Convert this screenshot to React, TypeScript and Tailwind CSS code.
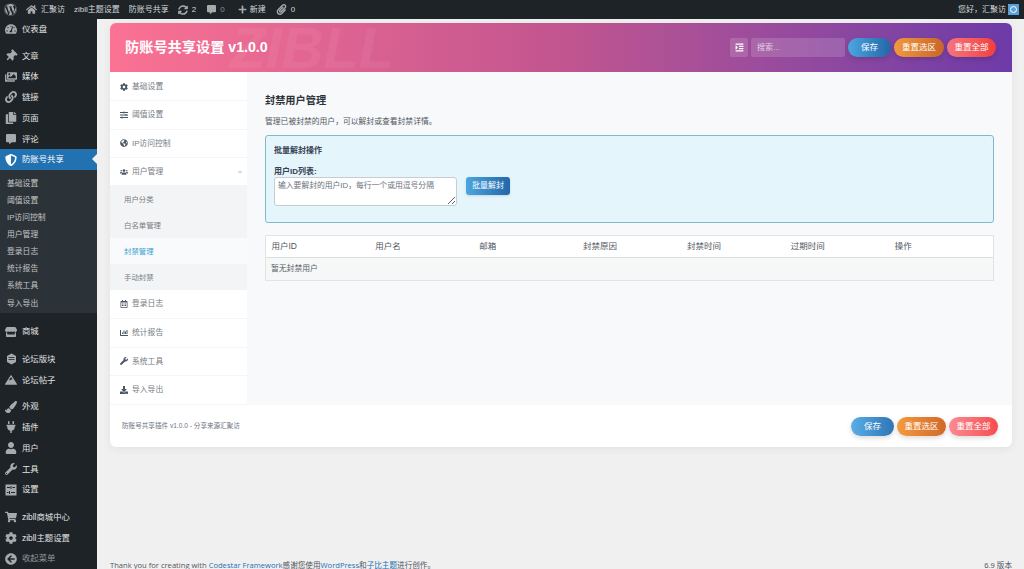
import type { ReactNode } from "react";
import {
  FaArrowCircleLeft,
  FaChartBar,
  FaChevronDown,
  FaCog,
  FaCommentAlt,
  FaCopy,
  FaDownload,
  FaGlobeAmericas,
  FaHome,
  FaImages,
  FaIndent,
  FaLink,
  FaMountain,
  FaPaintBrush,
  FaPaperclip,
  FaPlug,
  FaPlus,
  FaRegCalendarAlt,
  FaShieldAlt,
  FaShoppingCart,
  FaSlidersH,
  FaStore,
  FaSyncAlt,
  FaTachometerAlt,
  FaThumbtack,
  FaUser,
  FaUsers,
  FaWordpress,
  FaWrench,
} from "react-icons/fa";

const font = "font-['Liberation_Sans','Noto_Sans_CJK_SC',sans-serif]";

function MenuItem({ icon, label, className = "text-[#e2e4e6]" }: { icon: ReactNode; label: string; className?: string }) {
  return (
    <div className={`flex h-[21px] items-center text-[8.4px] ${className}`}>
      <span className="flex w-[22px] justify-center text-[12px] text-[#a7aaad]">{icon}</span>
      <span>{label}</span>
    </div>
  );
}

function ForumIcon() {
  return (
    <svg width="11" height="12" viewBox="0 0 11 12" fill="currentColor">
      <path d="M5.5 0.5 10 3v6l-4.5 2.5L1 9V3z" />
      <path d="M2.5 4.5h6M2.5 6.5h6" stroke="#1d2327" strokeWidth="0.8" />
    </svg>
  );
}

function SettingsIcon() {
  return (
    <svg width="12" height="12" viewBox="0 0 12 12">
      <rect x="0.5" y="0.5" width="11" height="11" fill="currentColor" />
      <path d="M2 3.5h3M7.5 3.5H10M2 8.5h1.5M6 8.5h4M6 2v3M4.5 7v3" stroke="#1d2327" strokeWidth="1" fill="none" />
    </svg>
  );
}

function Sidebar() {
  const subs = ["基础设置", "阈值设置", "IP访问控制", "用户管理", "登录日志", "统计报告", "系统工具", "导入导出"];
  return (
    <aside className="flex w-[97px] shrink-0 flex-col bg-[#1d2327]">
      <MenuItem icon={<FaTachometerAlt />} label="仪表盘" />
      <div className="mt-[6px]" />
      <MenuItem icon={<FaThumbtack className="rotate-45" />} label="文章" />
      <MenuItem icon={<FaImages />} label="媒体" />
      <MenuItem icon={<FaLink />} label="链接" />
      <MenuItem icon={<FaCopy />} label="页面" />
      <MenuItem icon={<FaCommentAlt className="text-[10px]" />} label="评论" />
      <div className="relative">
        <MenuItem icon={<span className="text-white"><FaShieldAlt /></span>} label="防账号共享" className="bg-[#2271b1] text-white" />
        <span className="absolute right-0 top-[5px] h-0 w-0 border-y-[5px] border-r-[5px] border-y-transparent border-r-[#f0f0f1]" />
      </div>
      <div className="flex h-[145px] flex-col bg-[#2c3338] pt-[5px]">
        {subs.map((s) => (
          <div key={s} className="flex h-[17.1px] items-center pl-[7px] text-[7.8px] text-[#c3c4c7]">
            {s}
          </div>
        ))}
      </div>
      <div className="mt-[8px]" />
      <MenuItem icon={<FaStore />} label="商城" />
      <div className="mt-[7px]" />
      <MenuItem icon={<ForumIcon />} label="论坛版块" />
      <MenuItem icon={<FaMountain />} label="论坛帖子" />
      <div className="mt-[6px]" />
      <MenuItem icon={<FaPaintBrush />} label="外观" />
      <MenuItem icon={<FaPlug />} label="插件" />
      <MenuItem icon={<FaUser />} label="用户" />
      <MenuItem icon={<FaWrench />} label="工具" />
      <MenuItem icon={<SettingsIcon />} label="设置" />
      <div className="mt-[7px]" />
      <MenuItem icon={<FaShoppingCart />} label="zibll商城中心" />
      <MenuItem icon={<FaCog />} label="zibll主题设置" />
      <MenuItem icon={<FaArrowCircleLeft />} label="收起菜单" className="text-[#94979b]" />
    </aside>
  );
}

function TopBar() {
  return (
    <header className="flex h-[19px] shrink-0 items-center bg-[#1d2327] text-[8px] text-[#d5d7d9]">
      <span className="flex w-[20px] justify-center pl-[1px] text-[13px] text-[#a7aaad]">
        <FaWordpress />
      </span>
      <span className="ml-[6px] flex items-center gap-[4px]">
        <FaHome className="text-[11px] text-[#a7aaad]" />
        汇聚访
      </span>
      <span className="ml-[9px]">zibll主题设置</span>
      <span className="ml-[9px]">防账号共享</span>
      <span className="ml-[9px] flex items-center gap-[4px]">
        <FaSyncAlt className="text-[10px] text-[#a7aaad]" />2
      </span>
      <span className="ml-[11px] flex items-center gap-[4px] text-[#8c8f94]">
        <FaCommentAlt className="text-[9px] text-[#a7aaad]" />0
      </span>
      <span className="ml-[13px] flex items-center gap-[3px]">
        <FaPlus className="text-[9px] text-[#a7aaad]" />
        新建
      </span>
      <span className="ml-[10px] flex items-center gap-[4px]">
        <FaPaperclip className="text-[11px] text-[#a7aaad]" />0
      </span>
      <span className="ml-auto mr-[2px]">您好，汇聚访</span>
      <span className="mr-[5px] flex h-[11px] w-[11px] items-center justify-center bg-[#5aa0d8]">
        <span className="h-[7px] w-[7px] rounded-full border border-white" />
      </span>
    </header>
  );
}

function PillButton({ label, tone }: { label: string; tone: string }) {
  return <button className={`h-[19px] rounded-full text-[8.5px] text-white shadow-[0_2px_5px_rgba(0,0,0,0.15)] ${tone}`}>{label}</button>;
}

function NavItem({ icon, label, h = "h-[28.6px]", children }: { icon: ReactNode; label: string; h?: string; children?: ReactNode }) {
  return (
    <div className={`flex items-center border-b border-[#f4f5f7] pl-[9px] text-[7.8px] text-[#767c84] ${h}`}>
      <span className="flex w-[9px] justify-center text-[8px] text-[#4b5563]">{icon}</span>
      <span className="ml-[4px]">{label}</span>
      {children}
    </div>
  );
}

function SettingsNav() {
  return (
    <nav className="flex w-[137px] shrink-0 flex-col bg-white pt-[1px]">
      <NavItem h="h-[28.35px]" icon={<FaCog />} label="基础设置" />
      <NavItem h="h-[28.35px]" icon={<FaSlidersH />} label="阈值设置" />
      <NavItem h="h-[28.35px]" icon={<FaGlobeAmericas />} label="IP访问控制" />
      <NavItem h="h-[28.35px]" icon={<FaUsers />} label="用户管理">
        <FaChevronDown className="ml-auto mr-[5px] text-[4px] text-[#9ca3af]" />
      </NavItem>
      <div className="flex flex-col bg-[#f3f4f5] text-[7.4px] text-[#767c84]">
        <div className="flex h-[26px] items-center pl-[14px]">用户分类</div>
        <div className="flex h-[26px] items-center pl-[14px]">白名单管理</div>
        <div className="flex h-[26px] items-center bg-[#f8fafc] pl-[14px] text-[#3b9fd1]">封禁管理</div>
        <div className="flex h-[26px] items-center pl-[14px]">手动封禁</div>
      </div>
      <NavItem icon={<FaRegCalendarAlt />} label="登录日志" />
      <NavItem icon={<FaChartBar />} label="统计报告" />
      <NavItem icon={<FaWrench />} label="系统工具" />
      <NavItem icon={<FaDownload />} label="导入导出" />
    </nav>
  );
}

function Content() {
  const cols = ["用户ID", "用户名", "邮箱", "封禁原因", "封禁时间", "过期时间", "操作"];
  return (
    <section className="flex-1 bg-[#f8f9fb] px-[18px] pt-[21px]">
      <h2 className="text-[10.2px] leading-[16px] font-bold text-[#2c3338]">封禁用户管理</h2>
      <p className="mt-[7px] text-[7.8px] leading-[12px] text-[#50575e]">管理已被封禁的用户，可以解封或查看封禁详情。</p>
      <div className="mt-[7px] h-[88px] rounded-[3px] border border-[#83b8cc] bg-[#e5f5fc] px-[8px] pt-[9px]">
        <h3 className="text-[8px] leading-[12px] font-bold text-[#374151]">批量解封操作</h3>
        <div className="mt-[10px] flex items-start">
          <div>
            <label className="block text-[8px] leading-[10px] font-bold text-[#374151]">用户ID列表:</label>
            <textarea
              readOnly
              className={`block h-[29px] w-[183px] rounded-[3px] border border-[#c5ccd3] bg-white px-[3px] py-[2px] text-[7.8px] leading-[11px] placeholder:text-[#6b7280] ${font}`}
              placeholder="输入要解封的用户ID，每行一个或用逗号分隔"
            />
          </div>
          <button className="ml-[9px] mt-[10px] h-[18px] w-[44px] rounded-[3px] bg-gradient-to-r from-[#4ca6e0] to-[#2367a8] text-[8px] text-white shadow-sm">
            批量解封
          </button>
        </div>
      </div>
      <div className="mt-[12px] border border-[#e1e3e6] bg-white text-[8.5px]">
        <div className="grid h-[22px] grid-cols-7 items-center border-b border-[#dcdfe2] text-[#50575e]">
          {cols.map((c) => (
            <span key={c} className="pl-[5.5px]">{c}</span>
          ))}
        </div>
        <div className="flex h-[22px] items-center bg-[#f6f7f7] pl-[5px] text-[7.8px] text-[#555d66]">暂无封禁用户</div>
      </div>
    </section>
  );
}

export default function App() {
  return (
    <div className={`flex h-[569px] w-[1024px] flex-col overflow-hidden bg-[#f0f0f1] ${font}`}>
      <TopBar />
      <div className="flex min-h-0 flex-1">
        <Sidebar />
        <main className="flex flex-1 flex-col pl-[13px] pr-[12px] pt-[4px]">
          <div className="h-[424px] overflow-hidden rounded-[6px] bg-white shadow-[0_2px_8px_rgba(0,0,0,0.06)]">
            <div className="relative flex h-[49px] items-center overflow-hidden bg-gradient-to-r from-[#fb7293] via-[#c2558f] to-[#6d3aa8] pl-[15px] pr-[16px]">
              <span className="absolute left-[120px] top-[-4px] text-[58px] leading-none font-bold italic text-white/5">ZIBLL</span>
              <h1 className="relative text-[14.2px] font-bold text-white">防账号共享设置 v1.0.0</h1>
              <div className="relative ml-auto flex items-center">
                <span className="flex h-[19px] w-[18px] items-center justify-center rounded-[2px] bg-white/15 text-[9px] text-white">
                  <FaIndent />
                </span>
                <div className="ml-[3px] flex h-[19px] w-[94px] items-center rounded-[2px] bg-white/15 pl-[6px] text-[8px] text-white/70">搜索...</div>
                <div className="ml-[3px] grid grid-cols-[43px_50px_49px] gap-[3px]">
                  <PillButton label="保存" tone="bg-gradient-to-r from-[#4ca6e0] to-[#2367a8]" />
                  <PillButton label="重置选区" tone="bg-gradient-to-r from-[#f09a3e] to-[#c9652a]" />
                  <PillButton label="重置全部" tone="bg-gradient-to-r from-[#f4737e] to-[#f23d3d]" />
                </div>
              </div>
            </div>
            <div className="flex h-[333px]">
              <SettingsNav />
              <Content />
            </div>
            <div className="flex h-[42px] items-center pl-[12px] pr-[14px]">
              <span className="text-[6.6px] text-[#6b7280]">防账号共享插件 v1.0.0 - 分享来源汇聚访</span>
              <div className="ml-auto grid grid-cols-[43px_49px_49px] gap-[3px]">
                <PillButton label="保存" tone="bg-gradient-to-r from-[#5aaee6] to-[#2f75b5]" />
                <PillButton label="重置选区" tone="bg-gradient-to-r from-[#f59a3c] to-[#d0692c]" />
                <PillButton label="重置全部" tone="bg-gradient-to-r from-[#fb8a92] to-[#f54a4f]" />
              </div>
            </div>
          </div>
          <footer className="mt-auto flex h-[9px] items-start justify-between text-[7.6px] leading-[11px] text-[#50575e]">
            <span className="font-['Open_Sans','Noto_Sans_CJK_SC',sans-serif]">
              Thank you for creating with <a className="text-[#2271b1]">Codestar Framework</a>感谢您使用<a className="text-[#2271b1]">WordPress</a>和<a className="text-[#2271b1]">子比主题</a>进行创作。
            </span>
            <span>6.9 版本</span>
          </footer>
        </main>
      </div>
    </div>
  );
}
